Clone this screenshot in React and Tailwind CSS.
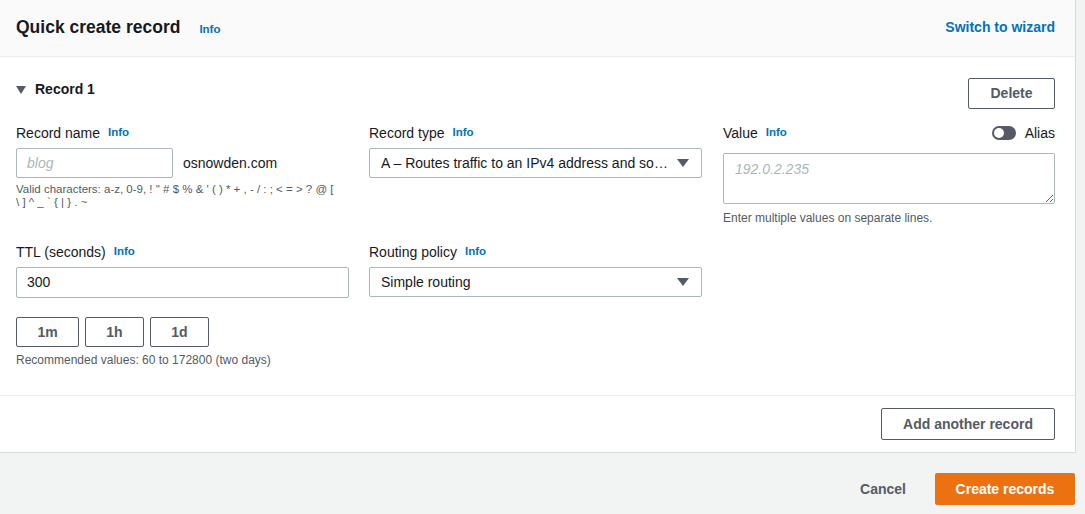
import { useState } from 'react';

const font = { fontFamily: '"Liberation Sans", Arial, sans-serif' };

function Info() {
  return <span className="ml-2 text-[11.5px] font-bold text-[#0073bb]">Info</span>;
}

function Label({ children }) {
  return (
    <div className="flex items-center h-[20px] text-[14px] text-[#16191f]">
      {children}
      <Info />
    </div>
  );
}

function Caret() {
  return (
    <svg width="12" height="8" viewBox="0 0 12 8" className="shrink-0">
      <path d="M0 0h12L6 8z" fill="#545b64" />
    </svg>
  );
}

function Select({ children }) {
  return (
    <div className="flex items-center justify-between h-[30px] border border-[#aab7b8] rounded-[2px] pl-[11px] pr-[12px] text-[14px] text-[#16191f]">
      <span className="truncate pr-[6px]">{children}</span>
      <Caret />
    </div>
  );
}

function SmallBtn({ children, className = '' }) {
  return (
    <button
      className={
        'h-[30px] border border-[#545b64] rounded-[2px] text-[14px] font-bold text-[#545b64] bg-white ' +
        className
      }
    >
      {children}
    </button>
  );
}

export default function App() {
  const [alias, setAlias] = useState(false);

  return (
    <div style={font} className="w-[1085px] h-[514px] bg-[#f2f3f3] text-[#16191f] overflow-hidden">
      <div className="w-[1076px] bg-white border-r border-b border-[#d5dbdb]">
        {/* Header */}
        <div className="h-[57px] bg-[#fafafa] border-b border-[#eaeded] flex items-center justify-between pl-[16px] pr-[20px]">
          <div className="flex items-center">
            <h1 className="text-[17.5px] font-bold leading-none">Quick create record</h1>
            <span className="ml-[19px] mt-[4px] text-[11.5px] font-bold text-[#0073bb]">Info</span>
          </div>
          <span className="text-[14px] font-bold text-[#0073bb] mt-[-2px]">Switch to wizard</span>
        </div>

        {/* Record */}
        <div className="pl-[16px] pr-[20px] pt-[21px] pb-[26px]">
          <div className="flex items-center justify-between">
            <div className="flex items-center gap-[9px] mt-[-8px]">
              <svg width="10" height="8" viewBox="0 0 10 8">
                <path d="M0 0h10L5 8z" fill="#545b64" />
              </svg>
              <span className="text-[14px] font-bold">Record 1</span>
            </div>
            <SmallBtn className="w-[87px] h-[31px]">Delete</SmallBtn>
          </div>

          <div className="grid grid-cols-3 gap-x-[20px] mt-[14px]">
            {/* Record name */}
            <div>
              <Label>Record name</Label>
              <div className="flex items-center mt-[5px]">
                <div className="w-[157px] h-[30px] border border-[#aab7b8] rounded-[2px] flex items-center px-[10px] text-[14px] italic text-[#aab7b8]">
                  blog
                </div>
                <span className="ml-[10px] text-[14px]">osnowden.com</span>
              </div>
              <p className="mt-[5px] text-[11.5px] leading-[13px] text-[#545b64] whitespace-nowrap">
                Valid characters: a-z, 0-9, ! " # $ % &amp; ' ( ) * + , - / : ; &lt; = &gt; ? @ [
                <br />
                \ ] ^ _ ` {'{'} | {'}'} . ~
              </p>
            </div>

            {/* Record type */}
            <div>
              <Label>Record type</Label>
              <div className="mt-[5px]">
                <Select>A – Routes traffic to an IPv4 address and some AWS resources</Select>
              </div>
            </div>

            {/* Value */}
            <div className="pl-[1px]">
              <div className="flex items-center justify-between h-[20px]">
                <div className="flex items-center text-[14px]">
                  Value
                  <Info />
                </div>
                <div className="flex items-center gap-[9px]">
                  <button
                    onClick={() => setAlias(!alias)}
                    className={
                      'w-[24px] h-[14px] rounded-full relative ' + (alias ? 'bg-[#0073bb]' : 'bg-[#545b64]')
                    }
                  >
                    <span
                      className={
                        'absolute top-[2px] w-[10px] h-[10px] rounded-full bg-white ' +
                        (alias ? 'left-[12px]' : 'left-[2px]')
                      }
                    />
                  </button>
                  <span className="text-[14px]">Alias</span>
                </div>
              </div>
              <textarea
                placeholder="192.0.2.235"
                className="mt-[10px] block w-full h-[51px] border border-[#aab7b8] rounded-[2px] px-[11px] py-[5px] text-[14px] outline-none placeholder:italic placeholder:text-[#aab7b8]"
              />
              <p className="mt-[5px] text-[12px] text-[#545b64]">Enter multiple values on separate lines.</p>
            </div>

            {/* TTL */}
            <div className="mt-[15px]">
              <Label>TTL (seconds)</Label>
              <div className="mt-[5px] h-[31px] border border-[#aab7b8] rounded-[2px] flex items-center px-[10px] text-[14px]">
                300
              </div>
              <div className="flex gap-[6px] mt-[19px]">
                <SmallBtn className="w-[63px]">1m</SmallBtn>
                <SmallBtn className="w-[59px]">1h</SmallBtn>
                <SmallBtn className="w-[59px]">1d</SmallBtn>
              </div>
              <p className="mt-[4px] text-[12px] text-[#545b64]">Recommended values: 60 to 172800 (two days)</p>
            </div>

            {/* Routing policy */}
            <div className="mt-[15px]">
              <Label>Routing policy</Label>
              <div className="mt-[5px]">
                <Select>Simple routing</Select>
              </div>
            </div>
          </div>
        </div>

        {/* Add another */}
        <div className="border-t border-[#eaeded] flex justify-end pr-[20px] pt-[12px] pb-[12px]">
          <SmallBtn className="w-[174px] h-[32px]">Add another record</SmallBtn>
        </div>
      </div>

      {/* Footer */}
      <div className="flex items-center justify-end gap-[29px] pr-[10px] pt-[20px]">
        <span className="text-[14px] font-bold text-[#545b64]">Cancel</span>
        <button className="w-[140px] h-[32px] bg-[#ec7211] rounded-[2px] text-[14px] font-bold text-white">
          Create records
        </button>
      </div>
    </div>
  );
}
